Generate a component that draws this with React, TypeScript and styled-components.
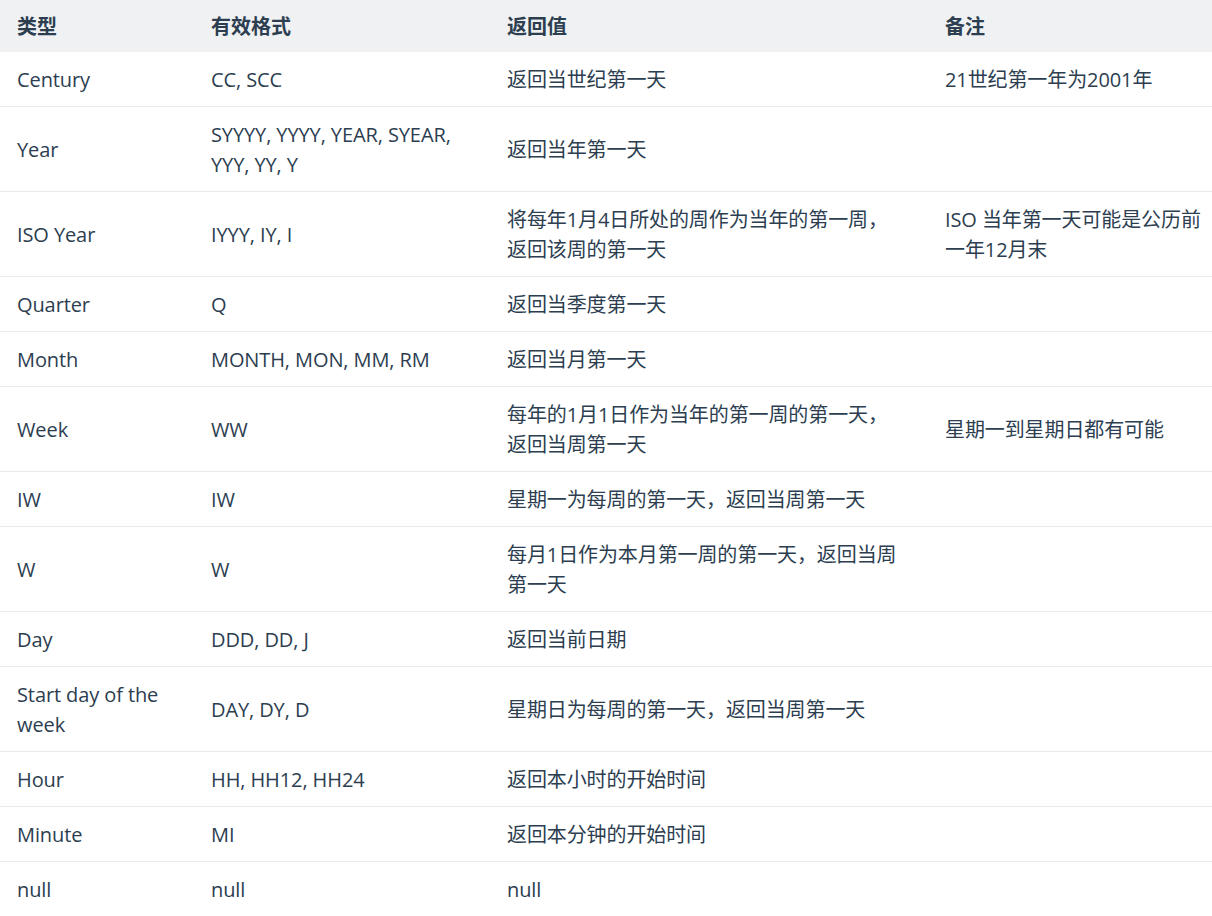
import React from "react";
import styled, { createGlobalStyle } from "styled-components";

const Global = createGlobalStyle`
  html, body { margin: 0; padding: 0; background: #fff; }
  body {
    font-family: "Open Sans", "Noto Sans CJK SC", sans-serif;
    color: #2c3e50;
  }
`;

const Table = styled.table`
  width: 1212px;
  border-collapse: collapse;
  table-layout: fixed;
  font-size: 20px;
  line-height: 30px;
`;

const HeadRow = styled.tr`
  background: #f0f1f3;
`;

const Th = styled.th<{ $w: number }>`
  width: ${(p) => p.$w}px;
  text-align: left;
  font-weight: 700;
  padding: 12px 17px 10px;
  box-sizing: border-box;
`;

const Row = styled.tr`
  border-bottom: 1px solid #e8e9eb;
`;

const Td = styled.td<{ $pr?: number }>`
  padding: 13px ${(p) => p.$pr ?? 17}px 11px 17px;
  vertical-align: middle;
  word-break: break-word;
  letter-spacing: -0.1px;
`;

const rows: [string, string, string, string][] = [
  ["Century", "CC, SCC", "返回当世纪第一天", "21世纪第一年为2001年"],
  ["Year", "SYYYY, YYYY, YEAR, SYEAR, YYY, YY, Y", "返回当年第一天", ""],
  ["ISO Year", "IYYY, IY, I", "将每年1月4日所处的周作为当年的第一周，返回该周的第一天", "ISO 当年第一天可能是公历前一年12月末"],
  ["Quarter", "Q", "返回当季度第一天", ""],
  ["Month", "MONTH, MON, MM, RM", "返回当月第一天", ""],
  ["Week", "WW", "每年的1月1日作为当年的第一周的第一天，返回当周第一天", "星期一到星期日都有可能"],
  ["IW", "IW", "星期一为每周的第一天，返回当周第一天", ""],
  ["W", "W", "每月1日作为本月第一周的第一天，返回当周第一天", ""],
  ["Day", "DDD, DD, J", "返回当前日期", ""],
  ["Start day of the week", "DAY, DY, D", "星期日为每周的第一天，返回当周第一天", ""],
  ["Hour", "HH, HH12, HH24", "返回本小时的开始时间", ""],
  ["Minute", "MI", "返回本分钟的开始时间", ""],
  ["null", "null", "null", ""],
];

export default function App() {
  return (
    <>
      <Global />
      <Table>
        <thead>
          <HeadRow>
            <Th $w={194}>类型</Th>
            <Th $w={296}>有效格式</Th>
            <Th $w={438}>返回值</Th>
            <Th $w={284}>备注</Th>
          </HeadRow>
        </thead>
        <tbody>
          {rows.map((r, i) => (
            <Row key={i}>
              <Td>{r[0]}</Td>
              <Td>{r[1]}</Td>
              <Td $pr={25}>{r[2]}</Td>
              <Td $pr={8}>{r[3]}</Td>
            </Row>
          ))}
        </tbody>
      </Table>
    </>
  );
}
